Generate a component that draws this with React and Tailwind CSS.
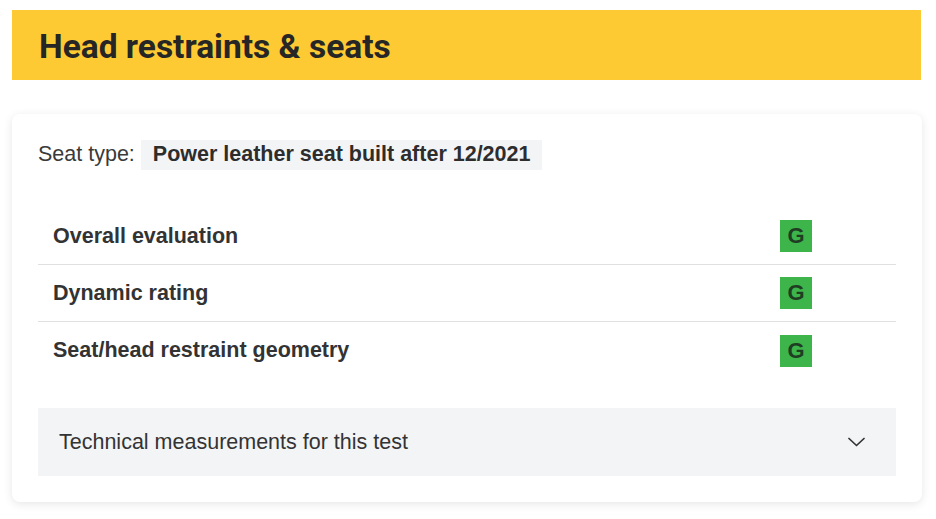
import React from "react";

const rows = ["Overall evaluation", "Dynamic rating", "Seat/head restraint geometry"];

function Badge() {
  return (
    <div className="flex h-[32px] w-[32px] items-center justify-center bg-[#3db54a] text-[22px] font-bold leading-none text-[#1f3d22]">
      G
    </div>
  );
}

export default function App() {
  return (
    <div className="min-h-[519px] bg-white px-[12px] pt-[10px] pb-[16px] font-['Liberation_Sans',Arial,sans-serif] text-[#333]">
      <div className="flex h-[70px] w-[909px] items-center bg-[#fdca33] pl-[27px] pt-[3px]">
        <h1 className="font-['Roboto',sans-serif] text-[33.5px] font-bold leading-none text-[#262626]">Head restraints &amp; seats</h1>
      </div>
      <div className="mt-[34px] w-[910px] rounded-[8px] bg-white p-[26px] shadow-[0_2px_10px_rgba(0,0,0,0.10)]">
        <div className="flex h-[30px] items-center text-[21.5px] leading-none">
          <span className="text-[#3a3a3a]">Seat type:</span>
          <span className="ml-[6px] flex h-[30px] items-center bg-[#f3f4f6] px-[12px] font-bold text-[#2d2d2d]">
            Power leather seat built after 12/2021
          </span>
        </div>
        <div className="mt-[38px]">
          {rows.map((r, i) => (
            <div
              key={r}
              className={`flex h-[57px] items-center justify-between pl-[15px] pr-[84px] ${i < rows.length - 1 ? "border-b border-[#e0e0e0]" : ""}`}
            >
              <span className="text-[21.5px] font-bold text-[#333]">{r}</span>
              <Badge />
            </div>
          ))}
        </div>
        <div className="mt-[29px] flex h-[68px] items-center justify-between bg-[#f3f4f6] pl-[21px] pr-[31px]">
          <span className="text-[21.5px] text-[#333]">Technical measurements for this test</span>
          <svg width="17" height="10" viewBox="0 0 17 10" fill="none">
            <path d="M1 1.5 L8.5 8.5 L16 1.5" stroke="#333" strokeWidth="1.7" strokeLinecap="round" strokeLinejoin="round" />
          </svg>
        </div>
      </div>
    </div>
  );
}
